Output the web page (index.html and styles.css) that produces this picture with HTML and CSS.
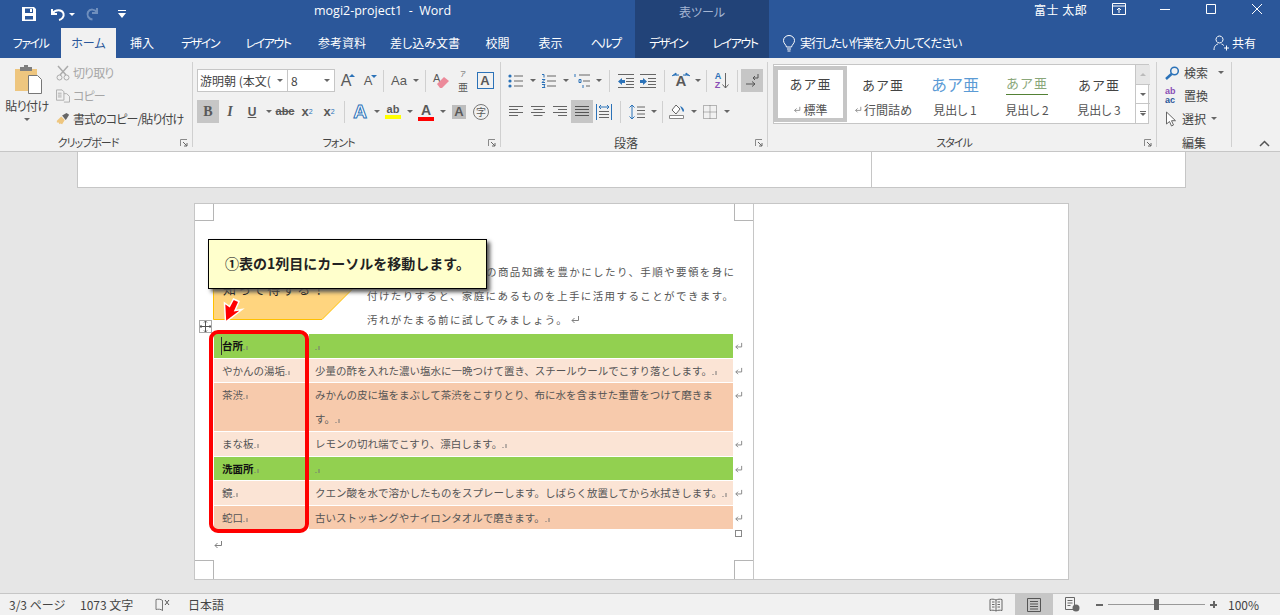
FILE: index.html
```html
<!DOCTYPE html>
<html lang="ja">
<head>
    <meta charset="UTF-8">
    <meta name="viewport" content="width=device-width, initial-scale=1.0">
    <title>mogi2-project1 - Word</title>
    <link rel="stylesheet" href="styles.css">
</head>
<body>
    <!-- Shared icons -->
    <svg class="sprite" aria-hidden="true">
        <symbol id="i-launcher" viewBox="0 0 8 8"><path d="M.5 7V.5H7" fill="none" stroke="#8a8a8a"/><path d="M3 3l4 4M7 4v3H4" fill="none" stroke="#666"/></symbol>
        <symbol id="i-return" viewBox="0 0 10 10"><path d="M8.5 1v4.500H2M4.500 3L2 5.500 4.500 8" fill="none" stroke="#808080"/></symbol>
        <symbol id="i-mark" viewBox="0 0 6 6"><path d="M.5 4.500h1M4 1v4" stroke="#777" fill="none"/></symbol>
    </svg>

    <header class="title-bar">
        <div class="qat">
            <svg class="qat-save" width="16" height="16" viewBox="0 0 16 16"><path fill="#fff" fill-rule="evenodd" d="M1 1h12l2 2v12H1zM4 2.500V7h8V2.500zM4 10v3.500h8V10z"/><path fill="#fff" d="M9 3h2v3H9z"/></svg>
            <svg class="qat-undo" width="18" height="16" viewBox="0 0 18 16"><path d="M3 3v5h5M3.500 7.500C6 3.500 13 3 14.500 7.500c1 3.500-2 6-4.500 6.500" fill="none" stroke="#fff" stroke-width="2"/></svg>
            <span class="caret light"></span>
            <svg class="qat-redo" width="16" height="16" viewBox="0 0 16 16"><path d="M12 2v5H7M12 6.500C10 3 5 2.500 3 6c-1.500 3.500.5 7 4.500 7.500" fill="none" stroke="#6f8fbd" stroke-width="2"/></svg>
            <svg class="qat-more" width="8" height="8" viewBox="0 0 8 8"><path fill="#fff" d="M0 0h8v1H0zM0 3h8L4 8z"/></svg>
        </div>
        <div class="doc-title">mogi2-project1&nbsp; - &nbsp;Word</div>
        <div class="context-title">表ツール</div>
        <div class="window-side">
            <span class="user">富士 太郎</span>
            <svg class="win-ribbon" width="14" height="12" viewBox="0 0 14 12"><path d="M.5.500h13v11H.5zM.5 3h13M7 10V5M5 7l2-2 2 2" fill="none" stroke="#fff"/></svg>
            <svg class="win-min" width="10" height="10" viewBox="0 0 10 10"><path d="M0 5.500h10" stroke="#fff"/></svg>
            <svg class="win-max" width="10" height="10" viewBox="0 0 10 10"><path d="M.5.500h9v9h-9z" fill="none" stroke="#fff"/></svg>
            <svg class="win-close" width="10" height="10" viewBox="0 0 10 10"><path d="M0 0l10 10M10 0L0 10" stroke="#fff"/></svg>
        </div>
    </header>

    <nav class="tab-bar">
        <span class="tab kana">ファイル</span>
        <span class="tab active">ホーム</span>
        <span class="tab">挿入</span>
        <span class="tab kana">デザイン</span>
        <span class="tab kana">レイアウト</span>
        <span class="tab">参考資料</span>
        <span class="tab">差し込み文書</span>
        <span class="tab">校閲</span>
        <span class="tab">表示</span>
        <span class="tab kana">ヘルプ</span>
        <span class="tab context kana">デザイン</span>
        <span class="tab context kana">レイアウト</span>
        <span class="tell-me">
            <svg width="14" height="17" viewBox="0 0 14 17"><path d="M4.500 12C4 9.500 1.500 8.500 1.500 5.500a5.500 5 0 0 1 11 0c0 3-2.500 4-3 6.500zM5 14h4M5.500 16h3" fill="none" stroke="#fff"/></svg>
            実行したい作業を入力してください
        </span>
        <span class="share">
            <svg width="16" height="16" viewBox="0 0 16 16"><path d="M6.500 1a3.500 3.500 0 1 0 .01 0zM1 15c0-4 2-5.500 4-6M8.500 9c1 .3 1.800.8 2.300 1.500M11 13h5M13.500 10.500v5" fill="none" stroke="#fff"/></svg>
            共有
        </span>
    </nav>

    <section class="ribbon">
        <div class="group clipboard">
            <div class="clip-body">
                <div class="paste">
                    <svg width="30" height="30" viewBox="0 0 30 30">
                        <path fill="#eec67f" d="M1 5h22v22H1z"/>
                        <path fill="#7f7f7f" d="M6 3h4V1h4v2h4v4H6z"/>
                        <path fill="#fff" stroke="#777" d="M14.500 11.500h9l4 4v14h-13z"/>
                    </svg>
                    <span class="paste-label">貼り付け</span>
                    <span class="caret"></span>
                </div>
                <div class="clip-rows">
                    <div class="clip-row muted">
                        <svg width="14" height="16" viewBox="0 0 14 16"><path d="M2 1l8 9M12 1L4 10" fill="none" stroke="#ababab" stroke-width="1.500"/><circle cx="3.500" cy="12.500" r="2.500" fill="none" stroke="#ababab"/><circle cx="10.500" cy="12.500" r="2.500" fill="none" stroke="#ababab"/></svg>
                        切り取り
                    </div>
                    <div class="clip-row muted">
                        <svg width="15" height="14" viewBox="0 0 15 14"><path d="M.5.500h6l2 2v9h-8zM2 4h4M2 6h4M2 8h4M8.500 4.500h3l3 3v6h-6" fill="#f1f1f1" stroke="#ababab"/></svg>
                        コピー
                    </div>
                    <div class="clip-row">
                        <svg width="16" height="14" viewBox="0 0 16 14"><path fill="#eec67f" d="M1 9l5-5 4 4-3 5-2-1-1 1-1-2H1z"/><path fill="#666" d="M7 3l5-3 3 2-3 5-1 1z"/></svg>
                        書式のコピー/貼り付け
                    </div>
                </div>
            </div>
            <div class="group-label"><span>クリップボード</span><svg class="launcher"><use href="#i-launcher"/></svg></div>
        </div>

        <div class="group font">
            <div class="tool-rows">
                <div class="tool-row">
                    <span class="combo font-name">游明朝 (本文(<span class="caret"></span></span>
                    <span class="combo font-size">8<span class="caret"></span></span>
                    <span class="tool letter big">A<i class="tri up"></i></span>
                    <span class="tool letter mid">A<i class="tri down"></i></span>
                    <span class="sep"></span>
                    <span class="tool letter aa">Aa</span><span class="caret-box"><span class="caret"></span></span>
                    <span class="sep"></span>
                    <span class="tool">
                        <span class="letter small-a">A</span>
                        <svg class="eraser" width="14" height="14" viewBox="0 0 14 14"><path fill="#ec8a9a" d="M1 9l7-7 5 4-7 7H4z"/></svg>
                    </span>
                    <span class="tool ruby"><small>ア</small><span>亜</span></span>
                    <span class="tool"><span class="boxed-a">A</span></span>
                </div>
                <div class="tool-row">
                    <span class="tool on letter bold-b">B</span>
                    <span class="tool letter italic-i">I</span>
                    <span class="tool letter under-u">U</span><span class="caret-box"><span class="caret"></span></span>
                    <span class="tool letter strike">abc</span>
                    <span class="tool letter script">x<sub>2</sub></span>
                    <span class="tool letter script">x<sup>2</sup></span>
                    <span class="sep"></span>
                    <span class="tool letter effect">A</span><span class="caret-box"><span class="caret"></span></span>
                    <span class="tool stacked"><span class="letter pen">ab</span><i class="bar yellow"></i></span><span class="caret-box"><span class="caret"></span></span>
                    <span class="tool stacked"><span class="letter color-a">A</span><i class="bar red"></i></span><span class="caret-box"><span class="caret"></span></span>
                    <span class="tool"><span class="shaded-a">A</span></span>
                    <span class="tool"><span class="ringed">字</span></span>
                </div>
            </div>
            <div class="group-label"><span>フォント</span><svg class="launcher"><use href="#i-launcher"/></svg></div>
        </div>

        <div class="group para">
            <div class="tool-rows">
                <div class="tool-row">
                    <span class="tool"><svg width="16" height="16" viewBox="0 0 16 16"><path d="M6 3h9M6 8h9M6 13h9" stroke="#666"/><circle cx="2" cy="3" r="1.600" fill="#2b72b8"/><circle cx="2" cy="8" r="1.600" fill="#2b72b8"/><circle cx="2" cy="13" r="1.600" fill="#2b72b8"/></svg></span><span class="caret-box"><span class="caret"></span></span>
                    <span class="tool"><svg width="16" height="16" viewBox="0 0 16 16"><path d="M6 3h9M6 8h9M6 13h9" stroke="#666"/><path d="M1 1.500h2v3M1 6.500h3l-3 3h3M1 11.500h3l-1 1.500 1 1.500H1" fill="none" stroke="#2b72b8"/></svg></span><span class="caret-box"><span class="caret"></span></span>
                    <span class="tool"><svg width="17" height="16" viewBox="0 0 17 16"><path d="M5 2h11M9 8h7M12 13h4" stroke="#666"/><path d="M1 1v3M5 6.500h2v3H5zM9 12v3" fill="none" stroke="#2b72b8"/></svg></span><span class="caret-box"><span class="caret"></span></span>
                    <span class="sep"></span>
                    <span class="tool"><svg width="16" height="14" viewBox="0 0 16 14"><path d="M0 .5h16M8 4.500h8M8 7.500h8M8 10.500h8M0 13.500h16" stroke="#666"/><path fill="#2b72b8" d="M0 7.500l4-3.500v2h3v3H4v2z"/></svg></span>
                    <span class="tool"><svg width="16" height="14" viewBox="0 0 16 14"><path d="M0 .5h16M8 4.500h8M8 7.500h8M8 10.500h8M0 13.500h16" stroke="#666"/><path fill="#2b72b8" d="M7 7.500L3 4v2H0v3h3v2z"/></svg></span>
                    <span class="sep"></span>
                    <span class="tool letter spread">A<svg width="20" height="8" viewBox="0 0 20 8"><path d="M1 4l4-3v2h3M19 4l-4-3v2h-3" fill="#2b72b8" stroke="#2b72b8"/></svg></span><span class="caret-box"><span class="caret"></span></span>
                    <span class="sep tight"></span>
                    <span class="tool sort"><span class="sort-az"><b class="blue">A</b><b class="violet">Z</b></span><svg width="7" height="16" viewBox="0 0 7 16"><path d="M3.500 0v15M.5 11.500l3 3.500 3-3.500" fill="none" stroke="#666"/></svg></span>
                    <span class="sep tight"></span>
                    <span class="tool on"><svg width="16" height="15" viewBox="0 0 16 15"><path d="M14 1v4H9M11 3L9 5l2 2" fill="none" stroke="#555"/><path d="M2 11h9M8 8.500l3 2.500-3 2.500" fill="none" stroke="#555"/></svg></span>
                </div>
                <div class="tool-row">
                    <span class="tool"><svg width="14" height="12" viewBox="0 0 14 12"><path d="M0 .5h14M0 3.500h9M0 6.500h14M0 9.500h9" stroke="#666"/></svg></span>
                    <span class="tool"><svg width="14" height="12" viewBox="0 0 14 12"><path d="M0 .5h14M2.500 3.500h9M0 6.500h14M2.500 9.500h9" stroke="#666"/></svg></span>
                    <span class="tool"><svg width="14" height="12" viewBox="0 0 14 12"><path d="M0 .5h14M5 3.500h9M0 6.500h14M5 9.500h9" stroke="#666"/></svg></span>
                    <span class="tool on"><svg width="14" height="12" viewBox="0 0 14 12"><path d="M0 .5h14M0 3.500h14M0 6.500h14M0 9.500h14" stroke="#555"/></svg></span>
                    <span class="tool"><svg width="16" height="16" viewBox="0 0 16 16"><path d="M.5 0v16M15.500 0v16" stroke="#2b72b8"/><path d="M3 3h10M5 1L3 3l2 2M11 1l2 2-2 2" fill="none" stroke="#2b72b8"/><path d="M3 7.500h10M3 10.500h10M3 13.500h10" stroke="#666"/></svg></span>
                    <span class="sep"></span>
                    <span class="tool"><svg width="16" height="16" viewBox="0 0 16 16"><path d="M3 1v14M.5 3.500L3 1l2.500 2.500M.5 12.500L3 15l2.500-2.500" fill="none" stroke="#2b72b8"/><path d="M8 3h8M8 6.500h8M8 10h8M8 13.500h8" stroke="#666"/></svg></span><span class="caret-box"><span class="caret"></span></span>
                    <span class="sep tight"></span>
                    <span class="tool"><svg width="17" height="17" viewBox="0 0 17 17"><path d="M3 7l4-5 4 4-4 5z" fill="#fff" stroke="#666"/><path d="M11 3c3 1 4 3 4 5l-1 1-1-2z" fill="#2b72b8"/><path d="M.5 12.500h14v3H.5z" fill="#fff" stroke="#888"/></svg></span><span class="caret-box"><span class="caret"></span></span>
                    <span class="tool"><svg width="14" height="14" viewBox="0 0 14 14"><path d="M.5.500h13v13H.5zM.5 7h13M7 .5v13" fill="none" stroke="#777" stroke-dasharray="1 1"/></svg></span><span class="caret-box"><span class="caret"></span></span>
                </div>
            </div>
            <div class="group-label kanji"><span>段落</span><svg class="launcher"><use href="#i-launcher"/></svg></div>
        </div>

        <div class="group styles">
            <div class="gallery">
                <div class="style-item selected"><span class="sample">あア亜</span><span class="style-name"><svg class="mini-return"><use href="#i-return"/></svg>標準</span></div>
                <div class="style-item"><span class="sample">あア亜</span><span class="style-name"><svg class="mini-return"><use href="#i-return"/></svg>行間詰め</span></div>
                <div class="style-item"><span class="sample h1">あア亜</span><span class="style-name">見出し 1</span></div>
                <div class="style-item"><span class="sample h2">あア亜</span><span class="style-name">見出し 2</span></div>
                <div class="style-item"><span class="sample h3">あア亜</span><span class="style-name">見出し 3</span></div>
                <div class="gallery-scroll">
                    <span class="scroll-cell off"><i class="tri-up"></i></span>
                    <span class="scroll-cell"><span class="caret"></span></span>
                    <span class="scroll-cell more"><span class="caret"></span></span>
                </div>
            </div>
            <div class="group-label"><span>スタイル</span><svg class="launcher"><use href="#i-launcher"/></svg></div>
        </div>

        <div class="group edit">
            <div class="edit-rows">
                <div class="edit-row">
                    <svg width="15" height="14" viewBox="0 0 15 14"><circle cx="9.500" cy="5" r="3.800" fill="none" stroke="#2b72b8" stroke-width="1.500"/><path d="M6.500 8L1 13" stroke="#2b72b8" stroke-width="2.500"/></svg>
                    検索<span class="caret far"></span>
                </div>
                <div class="edit-row">
                    <span class="replace-icon"><b class="violet">ab</b><b class="blue-dark">ac</b></span>
                    置換
                </div>
                <div class="edit-row">
                    <svg width="13" height="16" viewBox="0 0 13 16"><path d="M1.500 1v12l3-2.500 2 4.500 2-1-2-4.300h4z" fill="#fff" stroke="#666"/></svg>
                    選択<span class="caret"></span>
                </div>
            </div>
            <div class="group-label kanji"><span>編集</span></div>
        </div>

        <div class="ribbon-end">
            <svg width="11" height="7" viewBox="0 0 11 7"><path d="M1 6l4.500-4.500L10 6" fill="none" stroke="#555" stroke-width="1.500"/></svg>
        </div>
    </section>

    <main class="doc-area">
        <div class="prev-page"><div class="prev-cell"></div></div>
        <div class="page">
            <div class="page-main">
                <i class="crop tl"></i><i class="crop tr"></i><i class="crop bl"></i><i class="crop br"></i>

                <div class="topic">
                    <svg width="170" height="60" viewBox="0 0 170 60"><path d="M.5.500H168L109 59.500H.5z" fill="#ffd57f" stroke="#ffc000"/></svg>
                    <span class="topic-text">知って得する！<svg class="ret"><use href="#i-return"/></svg></span>
                </div>

                <p class="intro">
                    <span class="intro-first">の商品知識を豊かにしたり、手順や要領を身に</span><br>
                    付けたりすると、家庭にあるものを上手に活用することができます。<br>
                    汚れがたまる前に試してみましょう。<svg class="ret"><use href="#i-return"/></svg>
                </p>

                <table class="clean-table">
                    <tr class="head roomy">
                        <td><span class="caret-line"></span>台所<svg class="mark"><use href="#i-mark"/></svg></td>
                        <td><svg class="mark"><use href="#i-mark"/></svg></td>
                        <td class="row-end"><svg class="ret"><use href="#i-return"/></svg></td>
                    </tr>
                    <tr class="light">
                        <td>やかんの湯垢<svg class="mark"><use href="#i-mark"/></svg></td>
                        <td>少量の酢を入れた濃い塩水に一晩つけて置き、スチールウールでこすり落とします。<svg class="mark"><use href="#i-mark"/></svg></td>
                        <td class="row-end"><svg class="ret"><use href="#i-return"/></svg></td>
                    </tr>
                    <tr class="dark roomy">
                        <td>茶渋<svg class="mark"><use href="#i-mark"/></svg></td>
                        <td>みかんの皮に塩をまぶして茶渋をこすりとり、布に水を含ませた重曹をつけて磨きま<br>す。<svg class="mark"><use href="#i-mark"/></svg></td>
                        <td class="row-end"><svg class="ret"><use href="#i-return"/></svg></td>
                    </tr>
                    <tr class="light roomy">
                        <td>まな板<svg class="mark"><use href="#i-mark"/></svg></td>
                        <td>レモンの切れ端でこすり、漂白します。<svg class="mark"><use href="#i-mark"/></svg></td>
                        <td class="row-end"><svg class="ret"><use href="#i-return"/></svg></td>
                    </tr>
                    <tr class="head">
                        <td>洗面所<svg class="mark"><use href="#i-mark"/></svg></td>
                        <td><svg class="mark"><use href="#i-mark"/></svg></td>
                        <td class="row-end"><svg class="ret"><use href="#i-return"/></svg></td>
                    </tr>
                    <tr class="light roomy">
                        <td>鏡<svg class="mark"><use href="#i-mark"/></svg></td>
                        <td>クエン酸を水で溶かしたものをスプレーします。しばらく放置してから水拭きします。<svg class="mark"><use href="#i-mark"/></svg></td>
                        <td class="row-end"><svg class="ret"><use href="#i-return"/></svg></td>
                    </tr>
                    <tr class="dark">
                        <td>蛇口<svg class="mark"><use href="#i-mark"/></svg></td>
                        <td>古いストッキングやナイロンタオルで磨きます。<svg class="mark"><use href="#i-mark"/></svg></td>
                        <td class="row-end"><svg class="ret"><use href="#i-return"/></svg></td>
                    </tr>
                </table>
                <div class="para-end"><svg class="ret"><use href="#i-return"/></svg></div>

                <!-- Table handles -->
                <span class="move-handle">
                    <svg width="11" height="11" viewBox="0 0 11 11"><path d="M5.500 0v11M0 5.500h11M4 1.500L5.500 0 7 1.500M4 9.500L5.500 11 7 9.500M1.500 4L0 5.500 1.500 7M9.500 4L11 5.500 9.500 7" fill="none" stroke="#555"/></svg>
                </span>
                <span class="resize-handle"></span>

                <!-- Tutorial overlays -->
                <div class="callout">①表の1列目にカーソルを移動します。</div>
                <svg class="pointer" width="28" height="32" viewBox="0 0 28 32"><path d="M13.500 4l5.500 2.500-4 9 7-1L5.500 27l-1-19 5 3.500z" fill="#f00" stroke="#fff" stroke-width="1.500"/></svg>
                <div class="red-frame"></div>
            </div>
        </div>
    </main>

    <footer class="status-bar">
        <span class="st-page">3/3 ページ</span>
        <span class="st-words">1073 文字</span>
        <svg class="st-book" width="15" height="14" viewBox="0 0 15 14"><path d="M7.500 2.500C6 1 3 1 1 1.500v10c2-.5 5-.5 6.500 1zM7.500 2.500v10" fill="none" stroke="#777"/><path d="M10 2l4 5M14 2l-4 5" stroke="#555"/></svg>
        <span class="st-lang">日本語</span>
        <div class="view-side">
            <span class="view-btn"><svg width="14" height="14" viewBox="0 0 14 14"><path d="M7 2C5 1 3 1 1 1.500v11c2-.5 4-.5 6 .5 2-1 4-1 6-.5v-11C11 1 9 1 7 2zM7 2v11M3 4h2.500M3 6.500h2.500M3 9h2.500M8.500 4H11M8.500 6.500H11M8.500 9H11" fill="none" stroke="#666"/></svg></span>
            <span class="view-btn current"><svg width="14" height="14" viewBox="0 0 14 14"><path d="M.5.500h13v13H.5zM3 3.500h8M3 6h8M3 8.500h8M3 11h8" fill="none" stroke="#555"/></svg></span>
            <span class="view-btn"><svg width="15" height="15" viewBox="0 0 15 15"><path d="M.5.500h9v12H.5zM2.500 3.500h5M2.500 6h5M2.500 8.500h3" fill="none" stroke="#666"/><circle cx="11" cy="11" r="3.500" fill="#666"/></svg></span>
            <div class="zoom">
                <span class="zoom-minus"></span>
                <div class="zoom-track"><span class="zoom-thumb"></span></div>
                <span class="zoom-plus"></span>
            </div>
            <span class="zoom-value">100%</span>
        </div>
    </footer>
</body>
</html>
```

FILE: styles.css
```css
/* Page frame */
html, body {
    height: 100%;
}

body {
    margin: 0;
    display: flex;
    flex-direction: column;
    overflow: hidden;
    background-color: #e6e6e6;
    color: #444;
    font-family: "Noto Sans CJK JP", "Noto Sans", sans-serif;
    font-size: 12px;
    font-feature-settings: "palt";
}

.sprite {
    display: none;
}

svg {
    display: block;
    flex: none;
}

/* Title bar */
.title-bar {
    height: 28px;
    flex: none;
    display: flex;
    background-color: #2b579a;
    color: #fff;
}

.qat {
    width: 314px;
    display: flex;
    align-items: center;
}

.qat-save {
    margin-left: 21px;
}

.qat-undo {
    margin-left: 12px;
}

.qat .caret {
    margin-left: 2px;
}

.qat-redo {
    margin-left: 10px;
}

.qat-more {
    margin-left: 17px;
}

.doc-title {
    width: 321px;
    line-height: 22px;
    font-family: "Open Sans", sans-serif;
    font-size: 12.500px;
}

.context-title {
    width: 134px;
    background-color: #224378;
    color: #a5b6d3;
    text-align: center;
    line-height: 24px;
}

.window-side {
    flex: 1;
    display: flex;
    align-items: flex-start;
}

.user {
    margin-left: 265px;
    width: 66px;
    line-height: 20px;
    letter-spacing: .5px;
}

.win-ribbon {
    margin: 3px 0 0 12px;
}

.win-min {
    margin: 4px 0 0 34px;
}

.win-max {
    margin: 4px 0 0 36px;
}

.win-close {
    margin: 4px 0 0 36px;
}

/* Tabs */
.tab-bar {
    height: 30px;
    flex: none;
    display: grid;
    grid-template-columns: 61px 55px 52px 64px 72px 76px 90px 55px 51px 59px 66px 68px 13px 1fr;
    background-color: #2b579a;
    color: #fff;
    line-height: 30px;
    text-align: center;
}

.tab.kana {
    letter-spacing: -1.500px;
}

.tab.active {
    background-color: #f1f1f1;
    color: #2b579a;
}

.tab.context {
    background-color: #224378;
}

.tell-me {
    grid-column: 14;
    display: flex;
    align-items: center;
    gap: 4px;
    justify-content: flex-start;
    letter-spacing: -1.100px;
}

.share {
    position: absolute;
    right: 24px;
    top: 28px;
    display: flex;
    align-items: center;
    gap: 3px;
    height: 30px;
}

/* Ribbon */
.ribbon {
    height: 94px;
    flex: none;
    box-sizing: border-box;
    display: flex;
    padding: 4px 0 4px;
    background-color: #f1f1f1;
    border-bottom: 1px solid #c6c6c6;
    color: #444;
}

.group {
    display: flex;
    flex-direction: column;
    box-sizing: border-box;
    border-right: 1px solid #d0d0d0;
}

.group.clipboard {
    width: 193px;
}

.group.font {
    width: 308px;
    padding-left: 4px;
}

.group.para {
    width: 267px;
    padding-left: 4px;
}

.group.styles {
    width: 389px;
    padding-left: 5px;
}

.group.edit {
    width: 75px;
}

.group-label {
    margin-top: auto;
    margin-bottom: -3px;
    height: 15px;
    display: flex;
    align-items: center;
    line-height: 15px;
    font-size: 11px;
    letter-spacing: -1px;
    color: #444;
}

.group-label.kanji {
    font-size: 12px;
    letter-spacing: 0;
}

.group-label span {
    flex: 1;
    text-align: center;
}

.group.font .group-label, .group.para .group-label {
    margin-left: -4px;
}

.group.styles .group-label {
    margin-left: -5px;
}

.launcher {
    width: 8px;
    height: 8px;
    margin: 0 4px;
}

.ribbon-end {
    flex: 1;
    display: flex;
    align-items: flex-end;
    justify-content: flex-end;
    padding-right: 10px;
}

/* Carets */
.caret {
    display: inline-block;
    width: 0;
    height: 0;
    border-left: 3px solid transparent;
    border-right: 3px solid transparent;
    border-top: 3px solid #666;
}

.caret.light {
    border-top-color: #fff;
}

.caret-box {
    width: 11px;
    height: 23px;
    display: flex;
    align-items: center;
    justify-content: center;
}

/* Clipboard */
.clip-body {
    display: flex;
}

.paste {
    width: 54px;
    display: flex;
    flex-direction: column;
    align-items: center;
    padding-top: 2px;
}

.paste svg {
    margin-left: 4px;
}

.paste-label {
    margin-top: 4px;
    line-height: 16px;
    letter-spacing: -.5px;
    white-space: nowrap;
}

.paste .caret {
    margin-top: 4px;
}

.clip-rows {
    margin-top: -1px;
}

.clip-row {
    height: 23px;
    margin-left: 2px;
    display: flex;
    align-items: center;
    gap: 3px;
    letter-spacing: -.9px;
    white-space: nowrap;
}

.clip-row svg {
    width: 14px;
}

.clip-row.muted {
    color: #a6a6a6;
}

/* Tool rows */
.tool-rows {
    padding-top: 7px;
    display: flex;
    flex-direction: column;
    gap: 8px;
}

.tool-row {
    height: 23px;
    display: flex;
    align-items: center;
}

.tool {
    width: 22px;
    height: 23px;
    flex: none;
    display: flex;
    align-items: center;
    justify-content: center;
    position: relative;
    color: #595959;
}

.tool.on {
    background-color: #c6c6c6;
}

.tool.sort {
    width: 24px;
    gap: 1px;
}

.sep {
    width: 1px;
    height: 22px;
    margin: 0 5px;
    flex: none;
    background-color: #d0d0d0;
}

.sep.tight {
    margin: 0 3px;
}

.group.font .sep {
    margin: 0 4px;
}

.combo {
    height: 23px;
    box-sizing: border-box;
    flex: none;
    display: flex;
    align-items: center;
    justify-content: space-between;
    padding: 0 4px 0 2px;
    background-color: #fff;
    border: 1px solid #c6c6c6;
    overflow: hidden;
    white-space: nowrap;
}

.combo.font-name {
    width: 91px;
}

.combo.font-size {
    width: 47px;
    border-left: none;
    padding-left: 3px;
}

/* Letter tools */
.letter {
    font-family: "Liberation Sans", sans-serif;
    font-feature-settings: normal;
    line-height: 1;
}

.big {
    font-size: 16px;
}

.mid {
    font-size: 13px;
}

.tri {
    position: absolute;
    right: 2px;
    width: 0;
    height: 0;
    border-left: 3px solid transparent;
    border-right: 3px solid transparent;
}

.tri.up {
    top: 5px;
    border-bottom: 3px solid #2b72b8;
}

.tri.down {
    top: 6px;
    border-top: 3px solid #2b72b8;
}

.aa {
    font-size: 13px;
}

.small-a {
    position: absolute;
    left: 3px;
    top: 4px;
    font-size: 11px;
}

.eraser {
    position: absolute;
    right: 2px;
    bottom: 3px;
}

.ruby {
    flex-direction: column;
    gap: 3px;
    font-size: 10px;
    line-height: 11px;
}

.ruby small {
    font-size: 6px;
    line-height: 8px;
}

.boxed-a {
    width: 15px;
    height: 15px;
    display: block;
    border: 1px solid #2b72b8;
    font: bold 13px/15px "Liberation Sans", sans-serif;
    text-align: center;
}

.bold-b {
    font-family: "Liberation Serif", serif;
    font-weight: bold;
    font-size: 14px;
}

.italic-i {
    font-family: "Liberation Serif", serif;
    font-style: italic;
    font-weight: bold;
    font-size: 14px;
}

.under-u {
    font-weight: bold;
    font-size: 12px;
    text-decoration: underline;
}

.strike {
    font-size: 11px;
    font-weight: bold;
    text-decoration: line-through;
}

.script {
    font-weight: bold;
    font-size: 13px;
}

.script sub, .script sup {
    font-size: 7px;
    font-weight: normal;
    color: #2b72b8;
}

.effect {
    font-size: 19px;
    font-weight: bold;
    color: #fff;
    -webkit-text-stroke: 1px #2b72b8;
}

.stacked {
    flex-direction: column;
}

.pen {
    font-size: 11px;
    font-weight: bold;
}

.color-a {
    font-size: 14px;
    font-weight: bold;
}

.bar {
    width: 16px;
    height: 4px;
}

.bar.yellow {
    background-color: #ff0;
}

.bar.red {
    background-color: #f00;
}

.shaded-a {
    width: 14px;
    height: 14px;
    display: block;
    background-color: #bdbdbd;
    font: bold 13px/14px "Liberation Sans", sans-serif;
    text-align: center;
}

.ringed {
    width: 14px;
    height: 14px;
    display: block;
    border: 1px solid #777;
    border-radius: 50%;
    font-size: 10px;
    line-height: 14px;
    text-align: center;
}

.spread {
    font-weight: bold;
    font-size: 15px;
}

.spread svg {
    position: absolute;
    left: 1px;
    top: 3px;
}

.sort-az {
    display: flex;
    flex-direction: column;
    font: bold 9px/9px "Liberation Sans", sans-serif;
}

.blue {
    color: #2b72b8;
}

.violet {
    color: #8a4fb5;
}

.blue-dark {
    color: #2b579a;
}

/* Style gallery */
.gallery {
    margin-top: 2px;
    width: 376px;
    height: 60px;
    box-sizing: border-box;
    display: flex;
    background-color: #fff;
    border: 1px solid #c6c6c6;
}

.style-item {
    width: 72px;
    flex: none;
    box-sizing: border-box;
    display: flex;
    flex-direction: column;
    align-items: center;
    padding-top: 6px;
    color: #555;
}

.style-item.selected {
    margin: 1px 0;
    padding-top: 0;
    border: 4px solid #c6c6c6;
    width: 73px;
}

.sample {
    height: 27px;
    font-size: 13px;
    font-feature-settings: normal;
    letter-spacing: 1px;
    line-height: 27px;
    color: #444;
}

.sample.h1 {
    font-size: 16px;
    letter-spacing: 0;
    color: #5b9bd5;
}

.sample.h2 {
    height: 23px;
    line-height: 23px;
    border-bottom: 1px solid #538135;
    color: #8aa77a;
    margin-bottom: 3px;
}

.style-name {
    display: flex;
    align-items: center;
    gap: 2px;
    line-height: 16px;
    white-space: nowrap;
    margin-top: 4px;
}

.style-item.selected .style-name {
    margin-top: 5px;
}

.mini-return {
    width: 8px;
    height: 8px;
}

.gallery-scroll {
    margin-left: auto;
    width: 14px;
    flex: none;
    display: flex;
    flex-direction: column;
    border-left: 1px solid #c6c6c6;
}

.scroll-cell {
    flex: 1;
    display: flex;
    align-items: center;
    justify-content: center;
    border-bottom: 1px solid #c6c6c6;
}

.scroll-cell:last-child {
    border-bottom: none;
}

.scroll-cell.off {
    background-color: #e6e6e6;
}

.tri-up {
    width: 0;
    height: 0;
    border-left: 3px solid transparent;
    border-right: 3px solid transparent;
    border-bottom: 3px solid #bbb;
}

.scroll-cell.more {
    flex-direction: column;
    gap: 1px;
}

.scroll-cell.more::before {
    content: "";
    width: 6px;
    height: 1px;
    background-color: #666;
}

/* Find / replace */
.edit-rows {
    margin-top: -1px;
}

.edit-row {
    height: 23px;
    display: flex;
    align-items: center;
    padding-left: 8px;
    white-space: nowrap;
}

.edit-row svg {
    margin-right: 4px;
}

.edit-row .caret {
    margin-left: 5px;
}

.edit-row .caret.far {
    margin-left: 10px;
}

.replace-icon {
    width: 17px;
    margin-right: 2px;
    display: flex;
    flex-direction: column;
    font-family: "Liberation Sans", sans-serif;
    font-size: 9px;
    line-height: 9px;
}

/* Document */
.doc-area {
    flex: 1;
    min-height: 0;
    overflow: hidden;
}

.prev-page {
    width: 1109px;
    height: 36px;
    box-sizing: border-box;
    margin-left: 77px;
    background-color: #fff;
    border: 1px solid #c6c6c6;
    border-top: none;
}

.prev-cell {
    width: 793px;
    height: 100%;
    border-right: 1px solid #c6c6c6;
}

.page {
    width: 875px;
    height: 377px;
    box-sizing: border-box;
    margin: 15px 0 0 194px;
    background-color: #fff;
    border: 1px solid #c6c6c6;
}

.page-main {
    position: relative;
    width: 558px;
    height: 100%;
    border-right: 1px solid #c6c6c6;
    color: #555;
    font-size: 10.5px;
    font-feature-settings: normal;
}

.intro {
    margin: 0;
    padding: 56px 0 0 172px;
    line-height: 24px;
    letter-spacing: 1.4px;
    white-space: nowrap;
}

.intro-first {
    padding-left: 119px;
}

.ret {
    display: inline-block;
    width: 10px;
    height: 10px;
    margin-left: 2px;
    vertical-align: -1px;
}

.mark {
    display: inline-block;
    width: 6px;
    height: 6px;
    vertical-align: -1px;
}

/* Table */
.clean-table {
    width: 539px;
    margin: 2px 0 0 19px;
    table-layout: fixed;
    border-collapse: separate;
    border-spacing: 0;
    line-height: 23px;
}

.clean-table tr.roomy {
    line-height: 24px;
}

.clean-table td {
    height: 24px;
    box-sizing: border-box;
    padding: 0 0 0 6px;
    border-bottom: 1px solid #fff;
    vertical-align: top;
    white-space: nowrap;
}

.clean-table td:first-child {
    width: 95px;
    padding-left: 8px;
    border-right: 1px solid #fff;
    position: relative;
}

.clean-table td.row-end {
    width: 20px;
    padding: 0;
    background-color: transparent;
    border-bottom: none;
}

.row-end .ret {
    margin-left: 1px;
    width: 9px;
    height: 9px;
}

.clean-table tr.head td {
    background-color: #92d050;
}

.clean-table tr.head td:first-child {
    color: #111;
    font-weight: bold;
}

.clean-table tr.light td {
    background-color: #fbe4d5;
}

.clean-table tr.dark td {
    background-color: #f7caac;
}

.clean-table tr td.row-end {
    background-color: transparent;
}

.caret-line {
    position: absolute;
    left: 7px;
    top: 3px;
    width: 1px;
    height: 18px;
    background-color: #333;
}

.para-end {
    padding: 7px 0 0 16px;
}

/* Floating objects */
.crop {
    position: absolute;
    width: 18px;
    height: 16px;
    border: 0 solid #b5b5b5;
}

.crop.tl {
    left: 0;
    top: 0;
    border-width: 0 1px 1px 0;
}

.crop.tr {
    right: 0;
    top: 0;
    border-width: 0 0 1px 1px;
}

.crop.bl {
    left: 0;
    bottom: 0;
    height: 18px;
    border-width: 1px 1px 0 0;
}

.crop.br {
    right: 0;
    bottom: 0;
    height: 18px;
    border-width: 1px 0 0 1px;
}

.topic {
    position: absolute;
    left: 18px;
    top: 56px;
    width: 170px;
    height: 60px;
}

.topic svg:first-child {
    position: absolute;
    left: 0;
    top: 0;
}

.topic-text {
    position: absolute;
    left: 10px;
    top: 20px;
    font-size: 13px;
    line-height: 18px;
    letter-spacing: 2px;
    color: #222;
    white-space: nowrap;
}

.move-handle {
    position: absolute;
    left: 4px;
    top: 116px;
    width: 13px;
    height: 13px;
    box-sizing: border-box;
    display: flex;
    align-items: center;
    justify-content: center;
    background-color: #fff;
    border: 1px solid #aaa;
}

.resize-handle {
    position: absolute;
    left: 540px;
    top: 326px;
    width: 7px;
    height: 7px;
    box-sizing: border-box;
    background-color: #fff;
    border: 1px solid #888;
}

.callout {
    position: absolute;
    left: 13px;
    top: 35px;
    width: 279px;
    height: 50px;
    box-sizing: border-box;
    background-color: #ffffcc;
    border: 1px solid #000;
    box-shadow: 3px 3px 4px #555;
    color: #222;
    font-size: 14px;
    font-weight: bold;
    line-height: 46px;
    text-align: center;
    white-space: nowrap;
}

.pointer {
    position: absolute;
    left: 25px;
    top: 91px;
}

.red-frame {
    position: absolute;
    left: 14px;
    top: 126px;
    width: 100px;
    height: 203px;
    box-sizing: border-box;
    border: 4px solid #f00;
    border-radius: 9px;
}

/* Status bar */
.status-bar {
    height: 22px;
    flex: none;
    box-sizing: border-box;
    display: flex;
    align-items: center;
    background-color: #f1f1f1;
    border-top: 1px solid #c6c6c6;
    color: #444;
    font-size: 12px;
}

.st-page {
    margin-left: 9px;
    width: 71px;
    white-space: nowrap;
}

.st-words {
    width: 75px;
    white-space: nowrap;
}

.st-lang {
    margin-left: 18px;
    font-feature-settings: normal;
}

.view-side {
    margin-left: auto;
    height: 100%;
    display: flex;
    align-items: center;
}

.view-btn {
    width: 38px;
    height: 100%;
    display: flex;
    align-items: center;
    justify-content: center;
}

.view-btn.current {
    background-color: #c6c6c6;
}

.zoom {
    width: 121px;
    margin: 0 4px 0 5px;
    display: flex;
    align-items: center;
    gap: 5px;
}

.zoom-minus, .zoom-plus {
    width: 7px;
    height: 2px;
    flex: none;
    background-color: #666;
    position: relative;
}

.zoom-plus::after {
    content: "";
    position: absolute;
    left: 2.500px;
    top: -2.500px;
    width: 2px;
    height: 7px;
    background-color: #666;
}

.zoom-track {
    flex: 1;
    height: 1px;
    background-color: #999;
    display: flex;
    justify-content: center;
    align-items: center;
}

.zoom-thumb {
    width: 5px;
    height: 11px;
    background-color: #666;
}

.zoom-value {
    width: 59px;
    padding-left: 7px;
    box-sizing: border-box;
}
```
